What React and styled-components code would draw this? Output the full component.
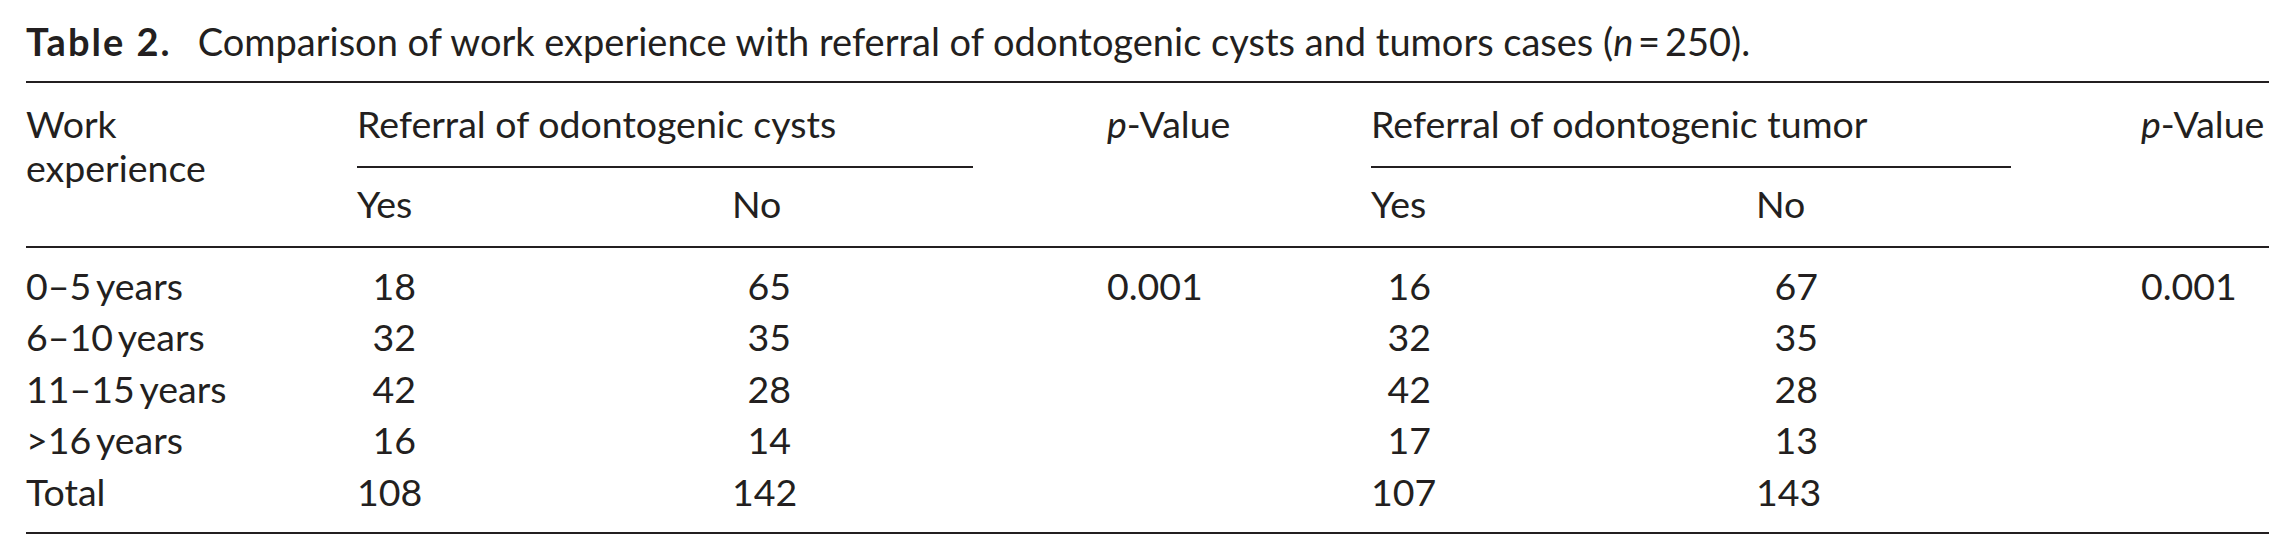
import React from "react";
import styled, { createGlobalStyle } from "styled-components";

const GlobalStyle = createGlobalStyle`
  body {
    margin: 0;
    background: #ffffff;
    color: #231f20;
    font-family: "Lato", "Open Sans", sans-serif;
  }
`;

const COLUMNS = "331px 375px 241px 398px 385px 255px 258px";

const Page = styled.div`
  width: 2243px;
  padding: 19.5px 26px 0;
  font-size: 37.5px;
`;

const Caption = styled.div`
  font-size: 38px;
  line-height: 42px;
  margin-bottom: 19.5px;
  white-space: nowrap;
`;

const CaptionLabel = styled.span`
  display: inline-block;
  width: 162px;
  font-weight: 700;
  letter-spacing: 2px;
`;

const Table = styled.div`
  border-top: 2px solid #231f20;
`;

const Head = styled.div`
  display: grid;
  grid-template-columns: ${COLUMNS};
  grid-template-rows: auto auto;
  line-height: 42px;
  padding: 19.5px 0 21.5px;
  border-bottom: 2px solid #231f20;
`;

const HeadCell = styled.div`
  grid-column: ${(p) => p.col};
  grid-row: ${(p) => p.row || "1"};
  padding-left: ${(p) => p.indent || 0}px;
  padding-top: ${(p) => (p.sub ? "14.5px" : 0)};
`;

const StubHead = styled(HeadCell)`
  line-height: 44px;
  margin-top: -1px;
`;

const GroupHead = styled.div`
  grid-column: ${(p) => p.col};
  grid-row: 1;
  padding-bottom: 21.5px;
  border-bottom: 2px solid #231f20;
`;

const Body = styled.div`
  display: grid;
  grid-template-columns: ${COLUMNS};
  grid-auto-rows: 51.5px;
  line-height: 51.5px;
  padding: 11.75px 0 14.75px;
  border-bottom: 2px solid #231f20;
`;

const Cell = styled.div`
  padding-left: ${(p) => p.indent || 0}px;
  white-space: nowrap;
`;

const Num = styled.span`
  display: inline-block;
  width: ${(p) => p.w || 60}px;
  text-align: right;
`;

const Italic = styled.i`
  font-style: italic;
`;

const rows = [
  { label: "0–5\u2009years", c: [18, 65], cp: "0.001", t: [16, 67], tp: "0.001" },
  { label: "6–10\u2009years", c: [32, 35], t: [32, 35] },
  { label: "11–15\u2009years", c: [42, 28], t: [42, 28] },
  { label: ">16\u2009years", c: [16, 14], t: [17, 13] },
  { label: "Total", c: [108, 142], t: [107, 143] },
];

const PValue = () => (
  <>
    <Italic>p</Italic>-Value
  </>
);

export default function App() {
  return (
    <>
      <GlobalStyle />
      <Page>
        <Caption>
          <CaptionLabel>Table 2.</CaptionLabel> Comparison of work experience with referral of
          odontogenic cysts and tumors cases (<Italic>n</Italic>
          {"\u2009=\u2009"}250).
        </Caption>
        <Table>
          <Head>
            <StubHead col="1" row="1 / 3">
              Work
              <br />
              experience
            </StubHead>
            <GroupHead col="2 / 4">Referral of odontogenic cysts</GroupHead>
            <HeadCell col="4" row="1 / 3" indent={134}>
              <PValue />
            </HeadCell>
            <GroupHead col="5 / 7">Referral of odontogenic tumor</GroupHead>
            <HeadCell col="7" row="1 / 3" indent={130}>
              <PValue />
            </HeadCell>
            <HeadCell col="2" row="2" sub>
              Yes
            </HeadCell>
            <HeadCell col="3" row="2" sub>
              No
            </HeadCell>
            <HeadCell col="5" row="2" sub>
              Yes
            </HeadCell>
            <HeadCell col="6" row="2" sub>
              No
            </HeadCell>
          </Head>
          <Body>
            {rows.map((r) => (
              <React.Fragment key={r.label}>
                <Cell>{r.label}</Cell>
                <Cell>
                  <Num w={59}>{r.c[0]}</Num>
                </Cell>
                <Cell>
                  <Num w={59}>{r.c[1]}</Num>
                </Cell>
                <Cell indent={134}>{r.cp}</Cell>
                <Cell>
                  <Num w={60}>{r.t[0]}</Num>
                </Cell>
                <Cell>
                  <Num w={62}>{r.t[1]}</Num>
                </Cell>
                <Cell indent={130}>{r.tp}</Cell>
              </React.Fragment>
            ))}
          </Body>
        </Table>
      </Page>
    </>
  );
}
